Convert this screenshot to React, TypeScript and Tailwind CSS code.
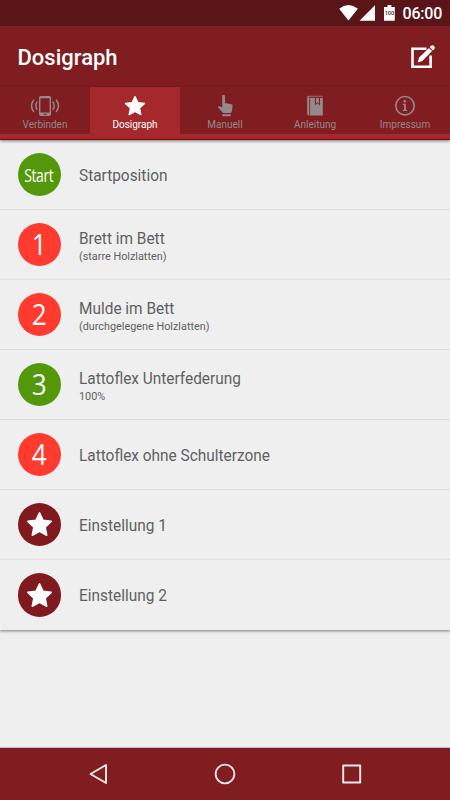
import type { ReactNode } from "react";
import clsx from "clsx";

const STAR_PATH =
	"M12 1.6 15.1 8.3 22.4 9.2 17 14.3 18.4 21.5 12 18 5.6 21.5 7 14.3 1.6 9.2 8.9 8.3Z";

function StarIcon({ className }: { className?: string }) {
	return (
		<svg
			viewBox="0 0 24 24"
			className={className}
			fill="currentColor"
			stroke="currentColor"
			strokeWidth="1.4"
			strokeLinejoin="round"
		>
			<path d={STAR_PATH} />
		</svg>
	);
}

function PhoneIcon() {
	return (
		<svg width="30" height="22" viewBox="0 0 30 22" fill="none" stroke="currentColor">
			<path
				fill="currentColor"
				stroke="none"
				fillRule="evenodd"
				d="M10.8 1h8.4a1.8 1.8 0 0 1 1.8 1.8v16.4a1.8 1.8 0 0 1-1.8 1.8h-8.4A1.8 1.8 0 0 1 9 19.2V2.8A1.8 1.8 0 0 1 10.8 1ZM10.4 3.3v14.2h9.2V3.3ZM13.4 18.8v1h3.2v-1Z"
			/>
			<path
				strokeWidth="1.5"
				strokeLinecap="round"
				d="M6.9 7.2q-2 3.6 0 7.2M3.6 5.1q-4.2 5.7 0 11.4M23.1 7.2q2 3.6 0 7.2M26.4 5.1q4.2 5.7 0 11.4"
			/>
		</svg>
	);
}

function HandIcon() {
	return (
		<svg width="30" height="22" viewBox="0 0 30 22" fill="currentColor">
			<path d="M12.2 1.2a1.4 1.4 0 0 1 2.8 0V8l6.2 1.2c1 .2 1.5.9 1.4 1.8l-.8 5.5q-.2 1.5-1.4 1.5h-6.7q-.8 0-1.4-.8L7.8 11.9l.9-.8 3.5 1.3Z" />
			<path d="M12.2 19.2h8.6v2h-8.6z" />
		</svg>
	);
}

function BookIcon() {
	return (
		<svg width="30" height="22" viewBox="0 0 30 22" fill="currentColor">
			<path d="M8.7.7H22.6v1H9.1v.9h13.7V20.6H9a1.8 1.8 0 0 1-1.8-1.8V2.2A1.5 1.5 0 0 1 8.7.7Z" />
			<path className="text-[#801d20]" fill="currentColor" d="M9.3 3.3h.8v17h-.8zM8.6 1.8h14v1h-14z" />
			<path
				fill="none"
				className="stroke-[#801d20]"
				strokeWidth="1"
				d="M15.4 2.6v7l2-1.9 2 1.9v-7"
			/>
		</svg>
	);
}

function InfoIcon() {
	return (
		<svg width="30" height="22" viewBox="0 0 30 22" fill="currentColor">
			<circle cx="15" cy="10.7" r="9.2" fill="none" stroke="currentColor" strokeWidth="1.6" />
			<circle cx="14.8" cy="6.2" r="1.3" />
			<path d="M12.9 8.8h3v6h1.3v1.2h-4.4v-1.2h1.2v-4.8h-1.1z" />
		</svg>
	);
}

function EditIcon() {
	return (
		<svg width="26" height="26" viewBox="0 0 26 26" fill="none" stroke="currentColor">
			<path strokeWidth="2.6" d="M16.5 4.7H2.5V22.7H20.6V11.5" />
			<path fill="currentColor" stroke="none" d="m7.7 18.4 1.4-4.8L19 3.9l3.1 3.1L12.3 16.9Z" />
			<path fill="currentColor" stroke="none" d="m19.7 3.1 1.3-1.3a2 2 0 0 1 2.700 0l.6.6a2 2 0 0 1 0 2.700L23 6.400Z" />
		</svg>
	);
}

function StatusBar() {
	return (
		<div className="flex h-[26px] items-center justify-end bg-[#5a1519] pr-[8.5px] text-white">
			<svg width="64" height="26" viewBox="0 0 64 26" fill="currentColor">
				<path d="M9.4 20.6.2 8.800Q9.400 1.400 18.900 8.800Z" />
				<path d="M36 5.200v15.600H20.500Z" />
				<path d="M45 7h3.500V5h3.800v2h3.500v13.800H45Z" />
				<text
					x="50.4"
					y="15"
					textAnchor="middle"
					className="fill-[#5a1519] font-medium"
					fontSize="5.5"
				>
					100
				</text>
			</svg>
			<span className="w-[39px] pt-0.5 text-[16px] leading-[24px] font-medium tracking-[-0.2px]">
				06:00
			</span>
		</div>
	);
}

const TABS: { label: string; icon: ReactNode; active?: boolean }[] = [
	{ label: "Verbinden", icon: <PhoneIcon /> },
	{
		label: "Dosigraph",
		icon: <StarIcon className="h-[22px] w-[22px]" />,
		active: true,
	},
	{ label: "Manuell", icon: <HandIcon /> },
	{ label: "Anleitung", icon: <BookIcon /> },
	{ label: "Impressum", icon: <InfoIcon /> },
];

const ROWS = [
	{ badge: "Start", color: "bg-[#53980a]", title: "Startposition" },
	{ badge: "1", color: "bg-[#ff3b30]", title: "Brett im Bett", detail: "(starre Holzlatten)" },
	{ badge: "2", color: "bg-[#ff3b30]", title: "Mulde im Bett", detail: "(durchgelegene Holzlatten)" },
	{ badge: "3", color: "bg-[#53980a]", title: "Lattoflex Unterfederung", detail: "100%" },
	{ badge: "4", color: "bg-[#ff3b30]", title: "Lattoflex ohne Schulterzone" },
	{ color: "bg-[#801a1e]", title: "Einstellung 1" },
	{ color: "bg-[#801a1e]", title: "Einstellung 2" },
];

function Badge({ text, color }: { text?: string; color: string }) {
	return (
		<div
			className={clsx(
				"flex h-[43.5px] w-[43.5px] shrink-0 items-center justify-center rounded-full text-white",
				color,
			)}
		>
			{!text && <StarIcon className="h-[27px] w-[27px]" />}
			{text && (
				<span
					className={clsx(
						"font-['Open_Sans',sans-serif]",
						text === "Start"
							? "scale-x-[0.78] text-[18px] leading-[22px] font-medium tracking-[-0.5px]"
							: "scale-x-90 pb-px text-[29px] leading-[42px]",
					)}
				>
					{text}
				</span>
			)}
		</div>
	);
}

export default function App() {
	return (
		<div className="flex h-[800px] w-[450px] flex-col overflow-hidden bg-[#efefef] font-[Roboto,sans-serif]">
			<StatusBar />
			<header className="flex h-[61px] items-center justify-between bg-[#801d20] pr-[14px] pl-[17.5px] text-white">
				<h1 className="pt-0.5 text-[22px] leading-[59px] font-medium">Dosigraph</h1>
				<EditIcon />
			</header>
			<nav className="grid h-[53px] shrink-0 grid-cols-5 border-b border-[#990509] bg-[#a5282d] shadow-[0_1px_3px_rgba(0,0,0,0.5)]">
				{TABS.map((tab) => (
					<div
						key={tab.label}
						className={clsx(
							"flex h-[47px] flex-col items-center pt-2",
							tab.active ? "text-white" : "bg-[#801d20] text-[#95898b]",
						)}
					>
						{tab.icon}
						<span className="pt-px text-[10px] leading-[14px]">{tab.label}</span>
					</div>
				))}
			</nav>
			<ul className="shadow-[0_1px_3px_rgba(0,0,0,0.5)]">
				{ROWS.map((row) => (
					<li
						key={row.title}
						className="flex h-[70px] items-center gap-[17.5px] border-b border-[#dcdcdc] pl-[17.5px] text-[#5f5f5f] last:border-b-0"
					>
						<Badge text={row.badge} color={row.color} />
						<div
							className={clsx("origin-left scale-x-[0.963]", row.detail ? "pt-[5px]" : "pt-0.5")}
						>
							<p className="text-[16px] leading-5">{row.title}</p>
							{row.detail && <p className="text-[11.25px] leading-4">{row.detail}</p>}
						</div>
					</li>
				))}
			</ul>
			<footer className="mt-auto h-[53px] border-t border-[#c4bfbf] bg-[#801d20]">
				<svg
					width="450"
					height="52"
					viewBox="0 0 450 52"
					fill="none"
					stroke="#f7e9e9"
					strokeWidth="1.9"
					strokeLinejoin="round"
				>
					<path d="M106 17v18L90.5 26Z" />
					<circle cx="225" cy="26" r="9.4" />
					<rect x="343.2" y="17.5" width="17" height="17" />
				</svg>
			</footer>
		</div>
	);
}
